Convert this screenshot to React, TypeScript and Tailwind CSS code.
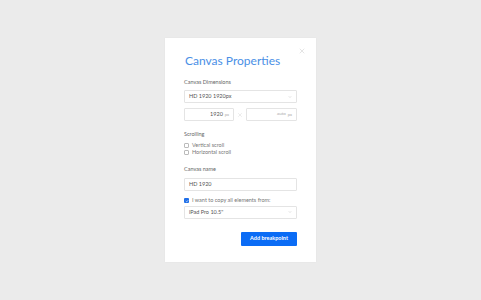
import { ChevronDown, X } from 'lucide-react';

function Select({ value, className = '' }: { value: string; className?: string }) {
  return (
    <div
      className={`flex items-center justify-between h-[13px] border border-[#e4e4e4] rounded-[1px] pl-[4px] pr-[4px] ${className}`}
    >
      <span className="text-[5.5px] text-[#555]">{value}</span>
      <ChevronDown className="w-[4px] h-[4px] text-[#aaa]" strokeWidth={2} />
    </div>
  );
}

function Checkbox({ label, checked = false }: { label: string; checked?: boolean }) {
  return (
    <label className="flex items-center gap-[3px] h-[7px]">
      {checked ? (
        <span className="w-[5px] h-[5px] rounded-[1px] bg-[#1f6fe8] flex items-center justify-center">
          <svg viewBox="0 0 10 10" className="w-[4px] h-[4px]">
            <path d="M2 5.2 L4.2 7.3 L8 3" stroke="white" strokeWidth="1.6" fill="none" />
          </svg>
        </span>
      ) : (
        <span className="w-[5px] h-[5px] rounded-[1px] border border-[#bbb] bg-white" />
      )}
      <span className="text-[5.5px] text-[#777]">{label}</span>
    </label>
  );
}

export default function App() {
  return (
    <div
      className="min-h-screen w-full bg-[#ebebeb] flex items-center justify-center"
      style={{ fontFamily: 'Lato, "Open Sans", sans-serif' }}
    >
      <div className="relative w-[151px] h-[224px] bg-white px-[19px] pt-[15px] shadow-[0_0_2px_rgba(0,0,0,0.04)]">
        <button className="absolute top-[9px] right-[10px] text-[#c8c8c8]" aria-label="Close">
          <X className="w-[8px] h-[8px]" strokeWidth={1.5} />
        </button>

        <h2 className="text-[12px] leading-[16px] font-normal text-[#4a8fe6] ml-[1px]">
          Canvas Properties
        </h2>

        <div className="mt-[9.5px] text-[5.5px] leading-[7px] text-[#666]">Canvas Dimensions</div>
        <Select value="HD 1920 1920px" className="mt-[4.5px]" />

        <div className="mt-[5px] flex items-center">
          <div className="w-[50px] h-[13px] border border-[#e4e4e4] rounded-[1px] flex items-center justify-end pr-[4px] gap-[2px]">
            <span className="text-[5.5px] text-[#555]">1920</span>
            <span className="text-[4px] text-[#aaa]">px</span>
          </div>
          <div className="flex-1 flex items-center justify-center">
            <X className="w-[6px] h-[6px] text-[#ccc]" strokeWidth={1.5} />
          </div>
          <div className="w-[51px] h-[13px] border border-[#e4e4e4] rounded-[1px] flex items-center justify-end pr-[4px] gap-[2px]">
            <span className="text-[4.5px] text-[#aaa]">auto</span>
            <span className="text-[4px] text-[#aaa]">px</span>
          </div>
        </div>

        <div className="mt-[9.5px] text-[5.5px] leading-[7px] text-[#666]">Scrolling</div>
        <div className="mt-[4px] flex flex-col">
          <Checkbox label="Vertical scroll" />
          <Checkbox label="Horizontal scroll" />
        </div>

        <div className="mt-[10.5px] text-[5.5px] leading-[7px] text-[#666]">Canvas name</div>
        <div className="mt-[4.5px] h-[13px] border border-[#e4e4e4] rounded-[1px] flex items-center pl-[4px]">
          <span className="text-[5.5px] text-[#555]">HD 1920</span>
        </div>

        <div className="mt-[6.5px]">
          <Checkbox label="I want to copy all elements from:" checked />
        </div>
        <Select value={'iPad Pro 10.5"'} className="mt-[1.5px] h-[13.5px]" />

        <div className="mt-[13px] flex justify-end">
          <button className="h-[14px] w-[56px] bg-[#0b6cf5] rounded-[1px] text-white text-[5.5px] font-bold">
            Add breakpoint
          </button>
        </div>
      </div>
    </div>
  );
}
